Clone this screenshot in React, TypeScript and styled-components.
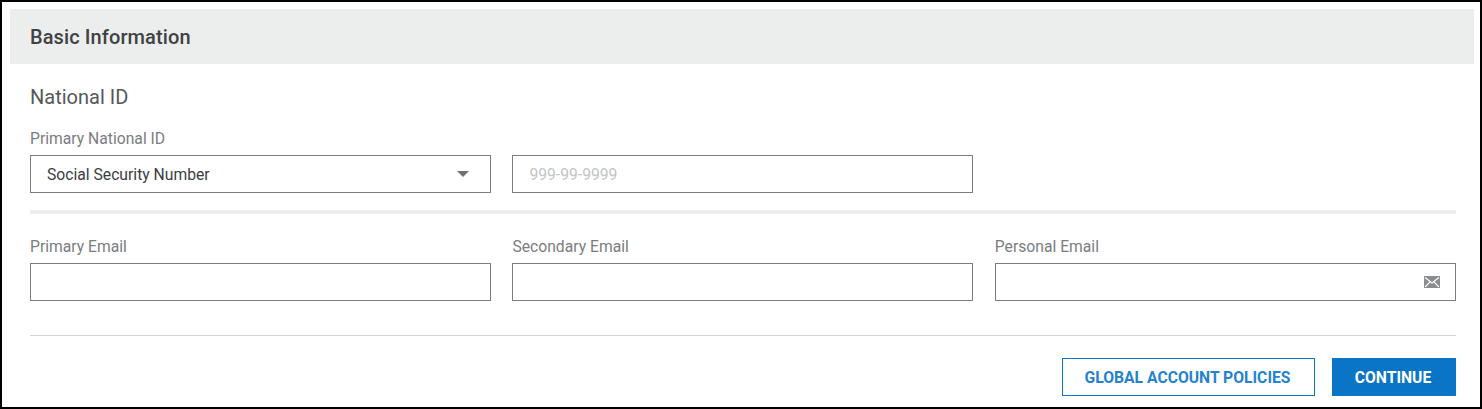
import React from "react";
import styled, { createGlobalStyle } from "styled-components";

const Global = createGlobalStyle`
  html, body { margin: 0; padding: 0; background: #fff; }
  body { font-family: Roboto, "Liberation Sans", sans-serif; }
  * { box-sizing: border-box; }
`;

const Frame = styled.div`
  width: 1482px;
  height: 409px;
  border: 2px solid #000;
  background: #fff;
  padding: 7px 6px 0 8px;
  overflow: hidden;
`;

const Header = styled.div`
  height: 55px;
  background: #eceded;
  padding-left: 20px;
  display: flex;
  align-items: center;
  font-size: 20px;
  font-weight: 500;
  letter-spacing: 0.1px;
  color: #3f4244;
`;

const Body = styled.div`
  padding: 0 18px 0 20px;
`;

const SectionTitle = styled.div`
  margin-top: 21px;
  height: 24px;
  line-height: 24px;
  font-size: 20px;
  color: #55585a;
`;

const Grid = styled.div<{ $top: number }>`
  display: grid;
  grid-template-columns: 461px 461px 461px;
  column-gap: 21.4px;
  margin-top: ${(p) => p.$top}px;
`;

const Field = styled.div`
  display: flex;
  flex-direction: column;
`;

const Label = styled.label`
  height: 20px;
  line-height: 20px;
  font-size: 15.7px;
  color: #7a7d7f;
  padding-top: 1px;
  margin-bottom: 7px;
`;

const Spacer = styled.div`
  height: 27px;
`;

const Box = styled.div`
  height: 38px;
  border: 1px solid #7b7e80;
  background: #fff;
  display: flex;
  align-items: center;
  justify-content: space-between;
  padding: 0 15px 0 16px;
`;

const Value = styled.span`
  font-size: 15.7px;
  color: #3a3d3f;
`;

const Placeholder = styled.span`
  font-size: 15.7px;
  color: #c2c5c7;
`;

const Caret = styled.span`
  width: 0;
  height: 0;
  margin-right: 6px;
  border-left: 6px solid transparent;
  border-right: 6px solid transparent;
  border-top: 6px solid #6e7173;
`;

const HeavyRule = styled.div`
  height: 4px;
  background: #eceded;
  margin-top: 17px;
`;

const ThinRule = styled.div`
  height: 1px;
  background: #d2d4d5;
  margin-top: 34px;
`;

const Actions = styled.div`
  display: flex;
  justify-content: flex-end;
  gap: 17px;
  margin-top: 22px;
`;

const Button = styled.button<{ $primary?: boolean }>`
  height: 38px;
  width: ${(p) => (p.$primary ? 124 : 253)}px;
  padding: 0 2px 0 0;
  border: 1px solid #0a75c4;
  background: ${(p) => (p.$primary ? "#0a75c4" : "#fff")};
  color: ${(p) => (p.$primary ? "#fff" : "#2582cc")};
  font-family: Roboto, "Liberation Sans", sans-serif;
  font-size: 15.7px;
  font-weight: 700;
`;

const MailIcon = () => (
  <svg width="16" height="12" viewBox="0 0 16 12" aria-hidden="true">
    <rect width="16" height="12" fill="#8a8d8f" />
    <path d="M1 1.5 L8 7 L15 1.5 M1 11 L6 5.8 M15 11 L10 5.8" fill="none" stroke="#fff" strokeWidth="1.1" />
  </svg>
);

export default function App() {
  return (
    <>
      <Global />
      <Frame>
        <Header>Basic Information</Header>
        <Body>
          <SectionTitle>National ID</SectionTitle>
          <Grid $top={19}>
            <Field>
              <Label>Primary National ID</Label>
              <Box>
                <Value>Social Security Number</Value>
                <Caret />
              </Box>
            </Field>
            <Field>
              <Spacer />
              <Box>
                <Placeholder>999-99-9999</Placeholder>
              </Box>
            </Field>
          </Grid>
          <HeavyRule />
          <Grid $top={22}>
            <Field>
              <Label>Primary Email</Label>
              <Box />
            </Field>
            <Field>
              <Label>Secondary Email</Label>
              <Box />
            </Field>
            <Field>
              <Label>Personal Email</Label>
              <Box>
                <span />
                <MailIcon />
              </Box>
            </Field>
          </Grid>
          <ThinRule />
          <Actions>
            <Button>GLOBAL ACCOUNT POLICIES</Button>
            <Button $primary>CONTINUE</Button>
          </Actions>
        </Body>
      </Frame>
    </>
  );
}
